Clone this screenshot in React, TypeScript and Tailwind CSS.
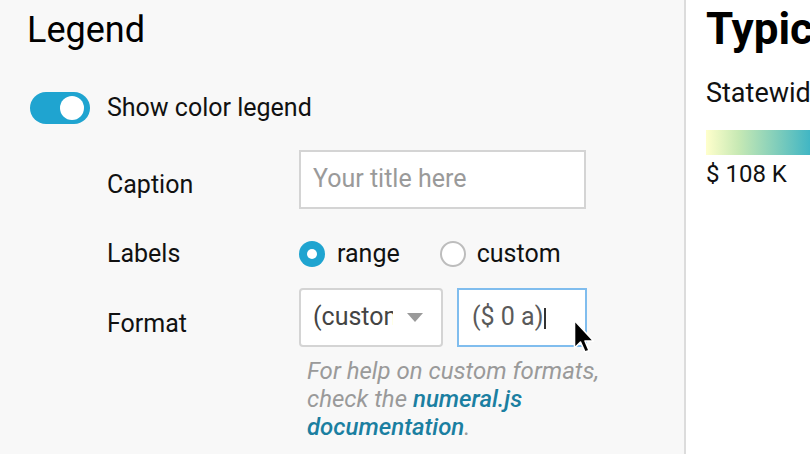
import React from "react";

const font = { fontFamily: "Roboto, 'Noto Sans', sans-serif" };

function Cursor() {
  return (
    <svg width="24" height="36" viewBox="0 0 24 36" className="absolute left-[114px] top-[29px]">
      <path
        d="M1.5 1.5 L1.5 29 L7.5 23 L12 33 L16 31.5 L12 22 L20.5 22 Z"
        fill="#000"
        stroke="#fff"
        strokeWidth="1.6"
        strokeLinejoin="round"
      />
    </svg>
  );
}

export default function App() {
  return (
    <div className="flex w-[810px] h-[454px] overflow-hidden bg-white text-[#111]" style={font}>
      <div className="w-[686px] shrink-0 bg-[#f8f8f8] border-r-2 border-[#dcdcdc] flex flex-col">
        <h2 className="pl-[27px] pt-[9px] text-[36px] leading-[42px] font-normal text-black">Legend</h2>

        <div className="mt-[41px] pl-[30px] flex items-center h-[32px]">
          <div className="relative w-[60px] h-[32px] rounded-full bg-[#1fa4d0]">
            <div className="absolute right-[6px] top-[4px] w-[24px] h-[24px] rounded-full bg-white" />
          </div>
          <span className="ml-[17px] text-[25px] leading-[28px]">Show color legend</span>
        </div>

        <div className="mt-[26px] flex items-start">
          <span className="w-[299px] pl-[107px] mt-[21px] text-[25px] leading-[28px] shrink-0">Caption</span>
          <div className="w-[287px] h-[59px] border-2 border-[#d4d4d4] bg-white flex items-center pl-[12px]">
            <span className="text-[25px] text-[#9a9a9a] leading-[28px] -mt-[1px]">Your title here</span>
          </div>
        </div>

        <div className="mt-[31px] flex items-center h-[28px]">
          <span className="w-[299px] pl-[107px] text-[25px] leading-[28px] shrink-0">Labels</span>
          <div className="flex items-center">
            <div className="w-[26px] h-[26px] rounded-full bg-[#1fa4d0] flex items-center justify-center">
              <div className="w-[10px] h-[10px] rounded-full bg-white" />
            </div>
            <span className="ml-[12px] text-[25px] leading-[28px]">range</span>
            <div className="ml-[40px] w-[26px] h-[26px] rounded-full border-2 border-[#bdbdbd] bg-white" />
            <span className="ml-[11px] text-[25px] leading-[28px]">custom</span>
          </div>
        </div>

        <div className="mt-[20px] flex items-start">
          <span className="w-[299px] pl-[107px] mt-[22px] text-[25px] leading-[28px] shrink-0">Format</span>
          <div className="flex flex-col">
            <div className="flex items-start">
              <div className="w-[144px] h-[59px] border-2 border-[#d4d4d4] rounded-[4px] bg-white flex items-center pl-[12px]">
                <span className="w-[80px] overflow-hidden whitespace-nowrap text-[25px] leading-[28px] text-[#444] -mt-[2px]">(custom)</span>
                <svg width="16" height="9" viewBox="0 0 16 9" className="ml-[14px]">
                  <path d="M0 0 L16 0 L8 9 Z" fill="#9a9a9a" />
                </svg>
              </div>
              <div className="relative ml-[14px] w-[130px] h-[59px] border-2 border-[#80bdee] bg-white flex items-center pl-[13px]">
                <span className="text-[25px] leading-[28px] text-[#5a5a5a] -mt-[2px]">($ 0 a)</span>
                <span className="w-[2px] h-[21px] bg-[#333] ml-[1px] mt-[1px]" />
                <Cursor />
              </div>
            </div>
            <p className="mt-[10px] pl-[8px] w-[320px] text-[24px] leading-[28px] italic text-[#9a9a9a]">
              For help on custom formats, check the{" "}
              <span className="text-[#1b7fa1] font-medium">numeral.js documentation</span>.
            </p>
          </div>
        </div>
      </div>

      <div className="flex-1 bg-white pl-[20px] overflow-hidden whitespace-nowrap">
        <div className="pt-[3px] text-[44px] leading-[52px] font-bold text-black">Typical home value</div>
        <div className="mt-[22px] text-[27px] leading-[32px] text-[#111]">Statewide typical home value</div>
        <div
          className="mt-[21px] h-[25px] w-[130px]"
          style={{ background: "linear-gradient(to right, #ffffcc, #c7e9b4 25%, #7fcdbb 55%, #41b6c4 80%, #2c7fb8)" }}
        />
        <div className="mt-[5px] text-[24px] leading-[28px] text-[#111]">$ 108 K</div>
      </div>
    </div>
  );
}
